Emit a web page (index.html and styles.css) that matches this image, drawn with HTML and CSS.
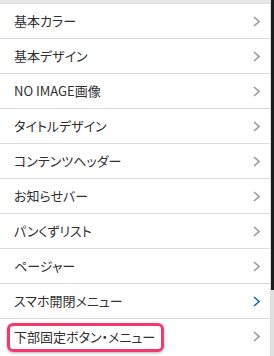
FILE: index.html
```html
<!DOCTYPE html>
<html lang="ja">
<head>
<meta charset="utf-8">
<link rel="stylesheet" href="styles.css">
</head>
<body>
<div class="frame">
  <ul class="menu">
    <li class="item"><span class="label">基本カラー</span><svg class="chev" viewBox="0 0 7 11"><polyline points="1,1 6,5.5 1,10"/></svg></li>
    <li class="item"><span class="label">基本デザイン</span><svg class="chev" viewBox="0 0 7 11"><polyline points="1,1 6,5.5 1,10"/></svg></li>
    <li class="item"><span class="label">NO IMAGE画像</span><svg class="chev" viewBox="0 0 7 11"><polyline points="1,1 6,5.5 1,10"/></svg></li>
    <li class="item"><span class="label">タイトルデザイン</span><svg class="chev" viewBox="0 0 7 11"><polyline points="1,1 6,5.5 1,10"/></svg></li>
    <li class="item"><span class="label">コンテンツヘッダー</span><svg class="chev" viewBox="0 0 7 11"><polyline points="1,1 6,5.5 1,10"/></svg></li>
    <li class="item"><span class="label">お知らせバー</span><svg class="chev" viewBox="0 0 7 11"><polyline points="1,1 6,5.5 1,10"/></svg></li>
    <li class="item"><span class="label">パンくずリスト</span><svg class="chev" viewBox="0 0 7 11"><polyline points="1,1 6,5.5 1,10"/></svg></li>
    <li class="item"><span class="label">ページャー</span><svg class="chev" viewBox="0 0 7 11"><polyline points="1,1 6,5.5 1,10"/></svg></li>
    <li class="item"><span class="label">スマホ開閉メニュー</span><svg class="chev chev-active" viewBox="0 0 7 11"><polyline points="1,1 6,5.5 1,10"/></svg></li>
    <li class="item"><span class="label label-marked">下部固定ボタン・メニュー</span><svg class="chev" viewBox="0 0 7 11"><polyline points="1,1 6,5.5 1,10"/></svg></li>
  </ul>
  <div class="scrollbar"><div class="thumb"></div></div>
</div>
</body>
</html>
```

FILE: styles.css
```css
* { box-sizing: border-box; }
html, body { margin: 0; padding: 0; }
body {
  width: 274px;
  height: 356px;
  overflow: hidden;
  background: #f0f0f0;
  font-family: "Noto Sans CJK JP", "Noto Sans", sans-serif;
  color: #333;
}
.frame {
  display: flex;
  height: 356px;
}
.menu {
  list-style: none;
  margin: 0;
  padding: 0;
  flex: 1;
  background: #fff;
  border-top: 3px solid #e8e8e8;
  border-right: 1px solid #dcdcdc;
}
.item {
  display: flex;
  align-items: center;
  justify-content: space-between;
  height: 35px;
  border-top: 1px solid #dcdcdc;
  padding: 0 10px 0 14px;
}
.label {
  font-size: 13px;
  font-feature-settings: "palt";
  line-height: 16px;
  white-space: nowrap;
  color: #2f2f2f;
}
.label-marked {
  margin-left: -7px;
  padding: 3px 6px 4px 4px;
  border: 3px solid #f3386d;
  border-radius: 6px;
  box-shadow: 0 1px 3px rgba(0,0,0,0.3);
  margin-top: 2px;
}
.chev {
  width: 7px;
  height: 11px;
  fill: none;
  stroke: #9a9a9a;
  stroke-width: 1.6;
}
.chev-active { stroke: #2167b8; }
.scrollbar {
  width: 3px;
  background: #e0e0e0;
  display: flex;
  flex-direction: column;
}
.thumb {
  height: 290px;
  background: #1b1b1b;
}
```
